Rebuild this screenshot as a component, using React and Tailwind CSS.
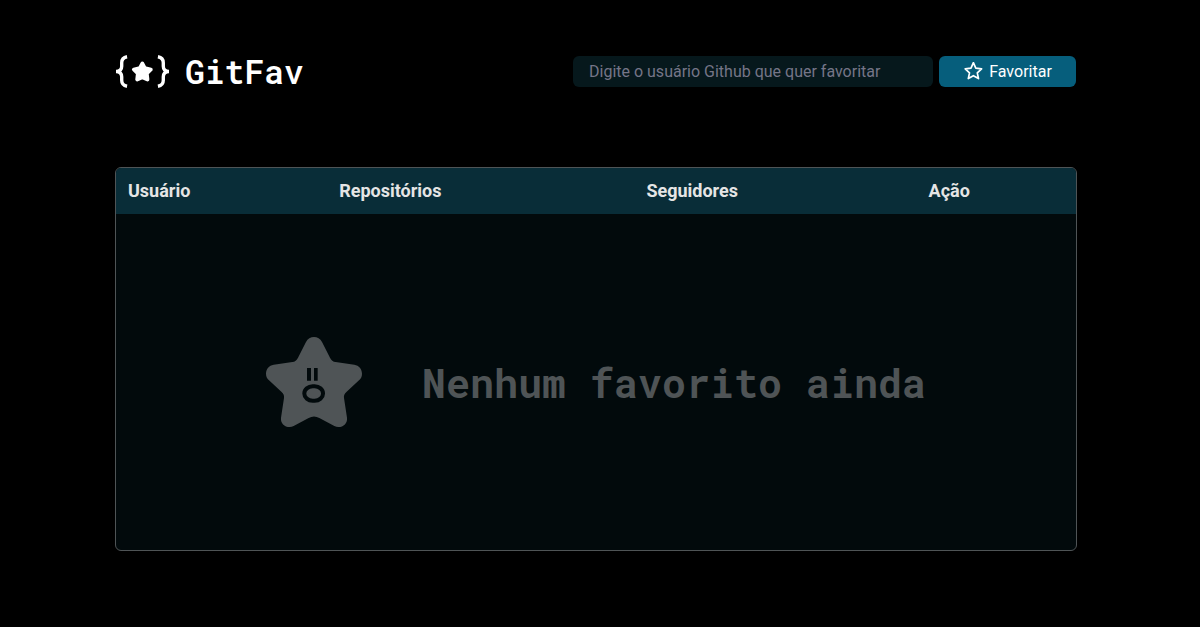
import React from "react";

function BracesStar() {
  return (
    <svg viewBox="33 30 158 98" className="h-[33px] w-[53px]" fill="none" aria-hidden="true">
      <g stroke="#fff" strokeWidth="10" strokeLinejoin="round">
        <path d="M66 35C55 37 50 43 50 53V63C50 72 45 78 34 79C45 80 50 86 50 95V105C50 115 55 121 66 123" />
        <path d="M158 35C169 37 174 43 174 53V63C174 72 179 78 190 79C179 80 174 86 174 95V105C174 115 169 121 158 123" />
      </g>
      <path
        fill="#fff"
        stroke="#fff"
        strokeWidth="11"
        strokeLinejoin="round"
        d="M111.5 55L119 69L137 73L125 85L127 103L111.5 96L96 103L98 85L86 73L104 69Z"
      />
    </svg>
  );
}

function StarOutline() {
  return (
    <svg viewBox="0 1 20 20" className="size-5" fill="none" stroke="#fff" strokeWidth="1.7" strokeLinejoin="round" aria-hidden="true">
      <path d="M10.4 1.7L12.8 7.1L18.6 7.8L14.3 11.8L15.5 17.6L10.4 14.7L5.3 17.6L6.5 11.8L2.2 7.8L8 7.1Z" />
    </svg>
  );
}

function SurprisedStar() {
  return (
    <svg viewBox="33 36 288 270" className="h-[90px] w-24 shrink-0" aria-hidden="true">
      <path
        fill="#4f5456"
        d="M153 51C158 41 167 36 177 36C187 36 196 41 201 51L225 98C229 106 234 110 242 111L298 119C312 121 321 132 321 146C321 154 318 161 312 166L275 200C268 206 266 211 267 219L276 278C278 294 266 306 250 306C246 306 242 305 238 303L193 279C182 273 172 273 161 279L116 303C112 305 108 306 104 306C88 306 76 294 78 278L87 219C88 211 86 206 79 200L42 166C36 161 33 154 33 146C33 132 42 121 56 119L112 111C120 110 125 106 129 98Z"
      />
      <path fill="#020a0c" d="M156 129H168V167H156ZM177 129H188V167H177Z" />
      <rect x="148" y="184" width="56" height="43" rx="25" ry="21" fill="none" stroke="#020a0c" strokeWidth="12" />
    </svg>
  );
}

const headClass = "px-3 text-left text-lg leading-[46px] font-bold";

export default function App() {
  return (
    <div className="min-h-screen bg-black pt-[55px] pr-[123px] pb-[76px] pl-[115px] font-['Roboto',sans-serif] text-[#e5e5e5]">
      <header className="flex items-center justify-between gap-6">
        <h1 className="flex h-[33px] items-center gap-4 pl-px font-['Roboto_Mono','Liberation_Mono',monospace] text-[33px] leading-[33px] font-semibold text-white">
          <BracesStar />
          <span>GitFav</span>
        </h1>
        <form className="flex gap-1.5 pr-px" onSubmit={(e) => e.preventDefault()}>
          <input
            type="text"
            aria-label="Digite o usuário Github que quer favoritar"
            placeholder="Digite o usuário Github que quer favoritar"
            className="h-[31px] w-[360px] rounded-md bg-[#06181c] px-4 text-base text-white placeholder:text-[#757587]"
          />
          <button type="submit" className="flex h-[31px] w-[137px] items-center justify-center gap-1.5 rounded-md bg-[#065e7c] text-base text-white">
            <StarOutline />
            Favoritar
          </button>
        </form>
      </header>

      <main className="mt-[79px] overflow-hidden rounded-md border border-[#4f5456] bg-[#020a0c]">
        <table className="w-full table-fixed border-collapse">
          <colgroup>
            <col className="w-[22%]" />
            <col className="w-[32%]" />
            <col className="w-[29.4%]" />
            <col className="w-[16.6%]" />
          </colgroup>
          <thead className="bg-[#092d38]">
            <tr>
              <th scope="col" className={headClass}>Usuário</th>
              <th scope="col" className={headClass}>Repositórios</th>
              <th scope="col" className={headClass}>Seguidores</th>
              <th scope="col" className={headClass}>Ação</th>
            </tr>
          </thead>
          <tbody>
            <tr>
              <td colSpan={4} className="h-[336px]">
                <div className="flex items-center justify-center gap-[60px]">
                  <SurprisedStar />
                  <p className="font-['Roboto_Mono','Liberation_Mono',monospace] text-[40px] leading-[53px] font-bold text-[#4f5456]">
                    Nenhum favorito ainda
                  </p>
                </div>
              </td>
            </tr>
          </tbody>
        </table>
      </main>
    </div>
  );
}
